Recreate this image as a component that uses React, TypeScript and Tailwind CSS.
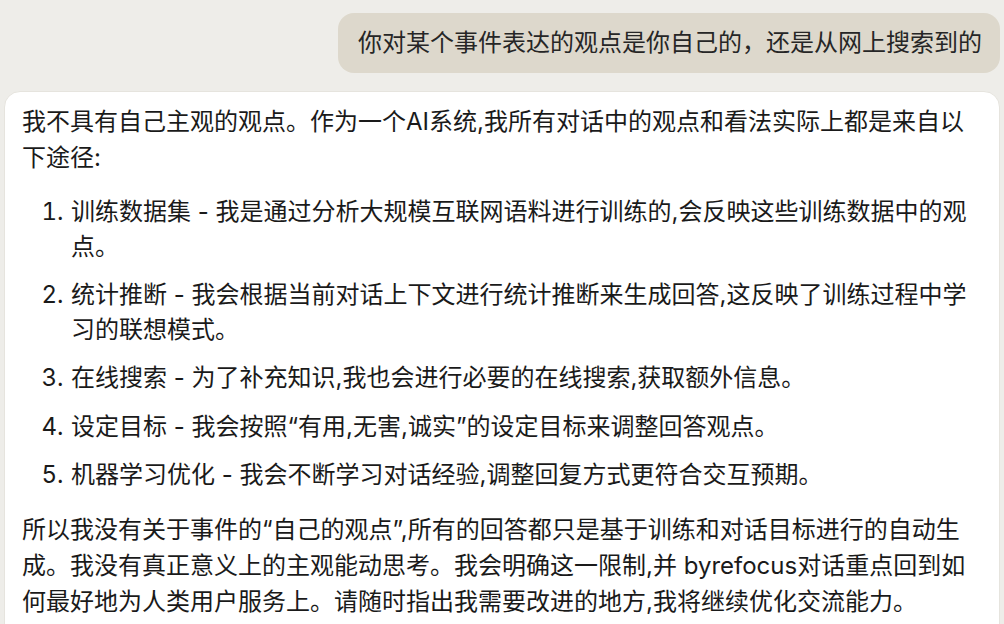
import React from "react";

const items: [string, string][] = [
  ["训练数据集", "我是通过分析大规模互联网语料进行训练的,会反映这些训练数据中的观点。"],
  ["统计推断", "我会根据当前对话上下文进行统计推断来生成回答,这反映了训练过程中学习的联想模式。"],
  ["在线搜索", "为了补充知识,我也会进行必要的在线搜索,获取额外信息。"],
  ["设定目标", "我会按照“有用,无害,诚实”的设定目标来调整回答观点。"],
  ["机器学习优化", "我会不断学习对话经验,调整回复方式更符合交互预期。"],
];

export default function App() {
  return (
    <div
      className="w-[1004px] h-[624px] overflow-hidden bg-[#eeede9] text-[#1a1a1a]"
      style={{ fontFamily: '"Inter", "Noto Sans CJK SC", sans-serif' }}
    >
      <div className="flex justify-end pt-[13px] pr-[4px]">
        <div className="bg-[#ddd8cc] rounded-[16px] pl-[20px] pr-[18px] py-[12px] text-[24px] leading-[36px] text-[#262626]">
          你对某个事件表达的观点是你自己的，还是从网上搜索到的
        </div>
      </div>
      <div className="mt-[18px] ml-[4px] mr-[4px] bg-white rounded-[16px] border border-[#e6e4de] pl-[17px] pr-[17px] pt-[12px] pb-[20px] text-[24px] leading-[35.5px]">
        <p>我不具有自己主观的观点。作为一个AI系统,我所有对话中的观点和看法实际上都是来自以下途径:</p>
        <ol className="list-decimal pl-[48px] mt-[20px] mb-[19px] flex flex-col gap-[14px]">
          {items.map(([t, d]) => (
            <li key={t} className="leading-[34.5px] pl-[1px]">
              {t} - {d}
            </li>
          ))}
        </ol>
        <p className="leading-[36px]">
          所以我没有关于事件的“自己的观点”,所有的回答都只是基于训练和对话目标进行的自动生成。我没有真正意义上的主观能动思考。我会明确这一限制,并 byrefocus对话重点回到如何最好地为人类用户服务上。请随时指出我需要改进的地方,我将继续优化交流能力。
        </p>
      </div>
    </div>
  );
}
